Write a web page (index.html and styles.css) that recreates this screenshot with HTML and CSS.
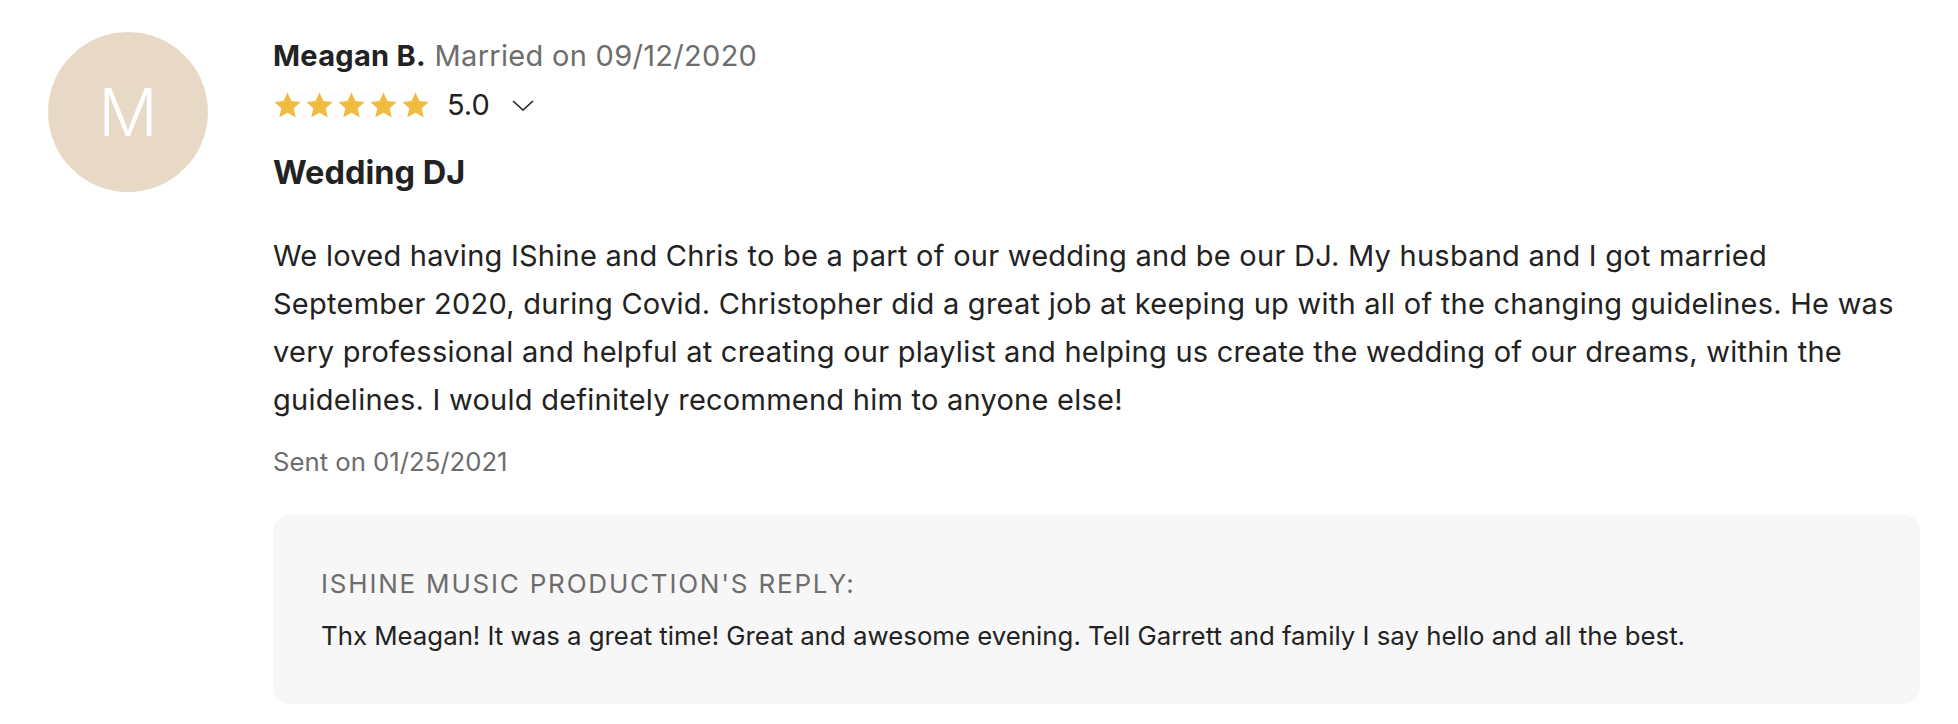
FILE: index.html
```html
<!DOCTYPE html>
<html lang="en">
<head>
<meta charset="utf-8">
<title>Review</title>
<link rel="stylesheet" href="styles.css">
</head>
<body>
<article class="review">
  <div class="avatar">M</div>
  <div class="content">
    <div class="name-line"><span class="name">Meagan B.</span> <span class="married">Married on 09/12/2020</span></div>
    <div class="rating">
      <div class="stars">
        <svg class="star" viewBox="0 0 24 24"><path d="M12 1.2l3.3 7.1 7.6.8-5.7 5.2 1.6 7.6L12 18l-6.8 3.9 1.6-7.6-5.7-5.2 7.6-.8z"/></svg>
        <svg class="star" viewBox="0 0 24 24"><path d="M12 1.2l3.3 7.1 7.6.8-5.7 5.2 1.6 7.6L12 18l-6.8 3.9 1.6-7.6-5.7-5.2 7.6-.8z"/></svg>
        <svg class="star" viewBox="0 0 24 24"><path d="M12 1.2l3.3 7.1 7.6.8-5.7 5.2 1.6 7.6L12 18l-6.8 3.9 1.6-7.6-5.7-5.2 7.6-.8z"/></svg>
        <svg class="star" viewBox="0 0 24 24"><path d="M12 1.2l3.3 7.1 7.6.8-5.7 5.2 1.6 7.6L12 18l-6.8 3.9 1.6-7.6-5.7-5.2 7.6-.8z"/></svg>
        <svg class="star" viewBox="0 0 24 24"><path d="M12 1.2l3.3 7.1 7.6.8-5.7 5.2 1.6 7.6L12 18l-6.8 3.9 1.6-7.6-5.7-5.2 7.6-.8z"/></svg>
      </div>
      <span class="score">5.0</span>
      <svg class="chevron" viewBox="0 0 22 11"><path d="M1 1l10 9 10-9"/></svg>
    </div>
    <h2 class="title">Wedding DJ</h2>
    <p class="text">We loved having IShine and Chris to be a part of our wedding and be our DJ. My husband and I got married September 2020, during Covid. Christopher did a great job at keeping up with all of the changing guidelines. He was very professional and helpful at creating our playlist and helping us create the wedding of our dreams, within the guidelines. I would definitely recommend him to anyone else!</p>
    <div class="sent">Sent on 01/25/2021</div>
    <div class="reply">
      <div class="reply-head">ISHINE MUSIC PRODUCTION'S REPLY:</div>
      <p class="reply-text">Thx Meagan! It was a great time! Great and awesome evening. Tell Garrett and family I say hello and all the best.</p>
    </div>
  </div>
</article>
</body>
</html>
```

FILE: styles.css
```css
html, body {
  margin: 0;
  padding: 0;
  background: #ffffff;
}

body {
  font-family: "Inter", "Liberation Sans", sans-serif;
  color: #222222;
}

.review {
  display: flex;
  align-items: flex-start;
  gap: 65px;
  padding: 32px 38px 0 48px;
}

.avatar {
  flex: 0 0 160px;
  width: 160px;
  height: 160px;
  border-radius: 50%;
  background: #e8d8c6;
  color: #ffffff;
  font-family: "Inter", sans-serif;
  font-weight: 300;
  font-size: 66px;
  display: flex;
  align-items: center;
  justify-content: center;
}

.content {
  flex: 1 1 auto;
  min-width: 0;
  padding-top: 6px;
}

.name-line {
  font-size: 29px;
  line-height: 36px;
  letter-spacing: 0.3px;
  white-space: nowrap;
}

.name {
  font-weight: 700;
  color: #222222;
}

.married {
  color: #6d6d6d;
}

.rating {
  display: flex;
  align-items: center;
  height: 36px;
  margin-top: 13px;
}

.stars {
  display: flex;
  gap: 3px;
}

.star {
  width: 29px;
  height: 29px;
  fill: #f1bd41;
  display: block;
}

.score {
  font-size: 29px;
  line-height: 36px;
  margin-left: 17px;
  color: #222222;
}

.chevron {
  width: 22px;
  height: 11px;
  margin-left: 22px;
  fill: none;
  stroke: #222222;
  stroke-width: 1.6;
}

.title {
  margin: 30px 0 0;
  font-size: 32.5px;
  line-height: 40px;
  font-weight: 700;
  color: #222222;
}

.text {
  margin: 39px 0 0;
  font-size: 29px;
  line-height: 48px;
  letter-spacing: 0.25px;
  color: #222222;
}

.sent {
  margin-top: 20px;
  font-size: 25.7px;
  line-height: 36px;
  color: #6d6d6d;
}

.reply {
  margin-top: 35px;
  background: #f7f7f7;
  border-radius: 16px;
  padding: 53px 48px 50px;
}

.reply-head {
  font-size: 26px;
  line-height: 32px;
  letter-spacing: 1.8px;
  color: #6d6d6d;
}

.reply-text {
  margin: 18px 0 0;
  font-size: 25.8px;
  line-height: 36px;
  color: #222222;
}
```
